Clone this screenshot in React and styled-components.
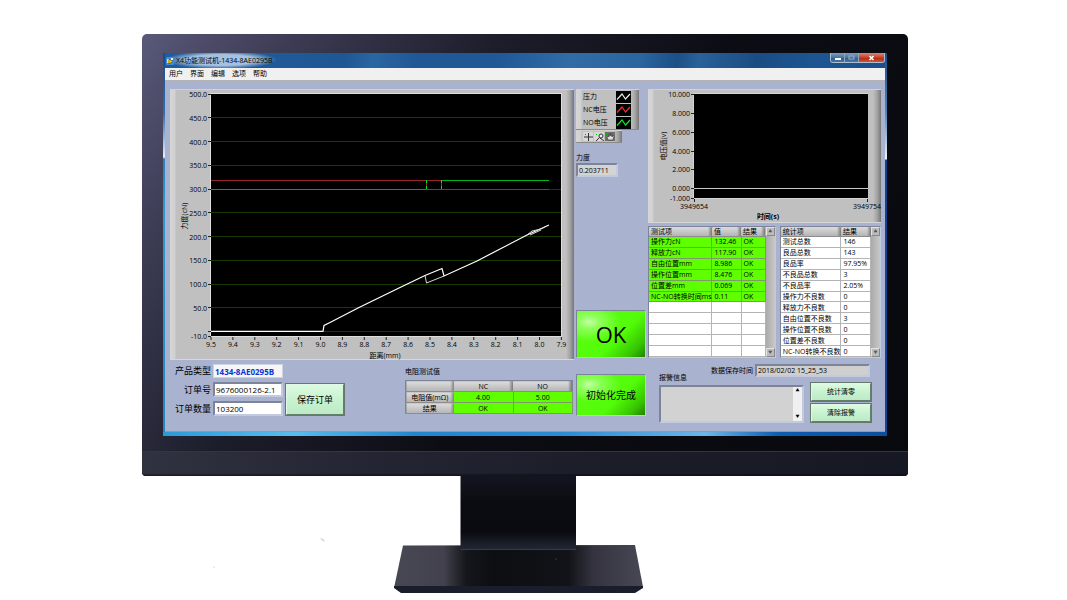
import styled, { createGlobalStyle, css } from "styled-components";

const GlobalStyle = createGlobalStyle`
	* {
		box-sizing: border-box;
	}
	body {
		margin: 0;
		background: #fff;
		color: #000;
		font-family: "Open Sans", "Noto Sans CJK SC", sans-serif;
		font-size: 7px;
		line-height: 10px;
	}
	button, input, textarea {
		font: inherit;
		color: inherit;
		margin: 0;
	}
`;

const menus = ["用户", "界面", "编辑", "选项", "帮助"];

const tests = [
	["操作力cN", "132.46", "OK"],
	["释放力cN", "117.90", "OK"],
	["自由位置mm", "8.986", "OK"],
	["操作位置mm", "8.476", "OK"],
	["位置差mm", "0.069", "OK"],
	["NC-NO转换时间ms", "0.11", "OK"],
	["", "", ""],
	["", "", ""],
	["", "", ""],
	["", "", ""],
	["", "", ""],
];

const stats = [
	["测试总数", "146"],
	["良品总数", "143"],
	["良品率", "97.95%"],
	["不良品总数", "3"],
	["不良品率", "2.05%"],
	["操作力不良数", "0"],
	["释放力不良数", "0"],
	["自由位置不良数", "3"],
	["操作位置不良数", "0"],
	["位置差不良数", "0"],
	["NC-NO转换不良数", "0"],
];

const legend = [
	{ name: "压力", color: "#e8e8e8" },
	{ name: "NC电压", color: "#e8303a" },
	{ name: "NO电压", color: "#00f020" },
];

function ForceChart() {
	const yTicks = [500, 450, 400, 350, 300, 250, 200, 150, 100, 50];
	const xTicks = Array.from({ length: 17 }, (_, i) => (9.5 - i * 0.1).toFixed(1));
	const y = (value) => 242.5 - value * 0.475;

	return (
		<ChartSvg viewBox="0 0 404 271" role="img" aria-label="力度 / 距离">
			<rect x="40" y="4" width="352" height="244" fill="#dedede" />
			<rect x="41" y="5" width="350" height="242" fill="#000" />
			{yTicks.map((value) => (
				<g key={value}>
					{value < 500 && (
						<path
							d={`M41 ${y(value)}H391`}
							stroke="#163c04"
							shapeRendering="crispEdges"
						/>
					)}
					<path d={`M38 ${y(value)}h3`} stroke="#222" shapeRendering="crispEdges" />
					<text x="37" y={y(value) + 3} textAnchor="end">
						{value.toFixed(1)}
					</text>
				</g>
			))}
			<path d="M41 242.5H391" stroke="#163c04" />
			<path d="M38 242.5h3M38 247.5h3" stroke="#222" />
			<text x="37" y="250" textAnchor="end">
				-10.0
			</text>
			{xTicks.map((value, i) => (
				<g key={value}>
					<path d={`M${41 + i * 21.9} 248v3`} stroke="#222" />
					<text x={41 + i * 21.9} y="258" textAnchor="middle">
						{value}
					</text>
				</g>
			))}
			<g fill="none" strokeWidth="1">
				<path d="M41 91.5H272" stroke="#98242a" />
				<path d="M272 91.5H379" stroke="#00b41c" />
				<path d="M41 100.5H256" stroke="#00a81c" />
				<path d="M256 100.5H379" stroke="#b82030" />
				<path d="M256.5 91V100M271.5 91V100" stroke="#c02830" />
				<path d="M256.5 91V100M271.5 91V100" stroke="#00e020" strokeDasharray="3 3" />
				<path
					d="M41 242.3H153L154 236.5L160 233.5L188 219L230 198.5L255 186.5L272 179.5L274 187L307 172L332 159L357 146L379 136"
					stroke="#fff"
					strokeWidth="1.2"
				/>
				<path
					d="M255 186.5L256.5 194L274 187M357 146L362 142L371 140L375 138M360 146L371 141"
					stroke="#d8d8d8"
				/>
			</g>
			<text x="215" y="269" textAnchor="middle">
				距离(mm)
			</text>
			<text transform="translate(17 127) rotate(-90)" textAnchor="middle">
				力度(cN)
			</text>
		</ChartSvg>
	);
}

function VoltageChart() {
	const ticks = [
		["10.000", 5],
		["8.000", 24],
		["6.000", 43],
		["4.000", 62],
		["2.000", 80],
		["0.000", 99],
		["-1.000", 109],
	];

	return (
		<ChartSvg viewBox="0 0 233 134" role="img" aria-label="电压值 / 时间">
			<rect x="45" y="4" width="175" height="106" fill="#d4d4d4" />
			<rect x="46" y="5" width="174" height="104" fill="#000" />
			<path d="M46 99.5H220" stroke="#c8c8c8" />
			{ticks.map(([label, top]) => (
				<g key={label}>
					<path d={`M43 ${top + 0.5}h3`} stroke="#222" />
					<text x="42" y={top + 3} textAnchor="end">
						{label}
					</text>
				</g>
			))}
			<path d="M46.5 110v3M219.5 110v3" stroke="#222" />
			<text x="46" y="120" textAnchor="middle">
				3949654
			</text>
			<text x="219" y="120" textAnchor="middle">
				3949754
			</text>
			<text x="120" y="130" textAnchor="middle" fontWeight="700">
				时间(s)
			</text>
			<text transform="translate(18 57) rotate(-90)" textAnchor="middle">
				电压值(v)
			</text>
		</ChartSvg>
	);
}

function Scroll({ name }) {
	return (
		<ScrollBar>
			<ScrollButton type="button" aria-label={`${name} 上`}>
				▲
			</ScrollButton>
			<ScrollButton type="button" aria-label={`${name} 下`}>
				▼
			</ScrollButton>
		</ScrollBar>
	);
}

function Stand() {
	return (
		<StandSvg viewBox="0 0 766 125" aria-hidden="true">
			<defs>
				<linearGradient id="neck" x1="0" y1="0" x2="0" y2="1">
					<stop offset="0" stopColor="#131620" />
					<stop offset="0.35" stopColor="#0b0c12" />
					<stop offset="0.75" stopColor="#0a0b0f" />
					<stop offset="1" stopColor="#222836" />
				</linearGradient>
				<linearGradient id="foot">
					<stop offset="0" stopColor="#484754" />
					<stop offset="0.2" stopColor="#42414d" />
					<stop offset="0.29" stopColor="#15161b" />
					<stop offset="0.4" stopColor="#0d0e12" />
					<stop offset="0.7" stopColor="#121318" />
					<stop offset="0.8" stopColor="#34333f" />
					<stop offset="1" stopColor="#484754" />
				</linearGradient>
			</defs>
			<path d="M261 69.500L493 69L501 111L252 112Z" fill="url(#foot)" />
			<path d="M252 110H501V112L493 117H259L252 112Z" fill="#1a1d2c" />
			<path d="M318.500 0H434V74H318.500Z" fill="url(#neck)" />
			<path d="M318.500 73.500H434" stroke="#343c4b" />
			<circle cx="414" cy="83" r="0.6" fill="#5a6072" />
			<path d="M178 62l3 1l2 3l-2-1z" fill="#c8c8c8" />
			<circle cx="72" cy="91" r="0.7" fill="#d0d0d0" />
		</StandSvg>
	);
}

function App() {
	return (
		<>
			<GlobalStyle />
			<Page>
				<Monitor>
					<Screen>
						<TitleBar>
							<svg width="8" height="8" viewBox="0 0 8 8" aria-hidden="true">
								<rect width="8" height="8" rx="1" fill="#3d8ede" />
								<path d="M1 2h3v4H1z" fill="#ffe23c" />
								<path d="M3 2l4 2.500l-4 2.500z" fill="#ffd21c" stroke="#543c00" strokeWidth="0.6" />
								<path d="M5 1h2v2H5z" fill="#e6f0fa" />
							</svg>
							<Title>X4功能测试机-1434-8AE0295B</Title>
							<WindowButtons>
								<WindowButton type="button" aria-label="最小化">
									<svg width="8" height="6" viewBox="0 0 8 6">
										<path d="M1 3h6v2H1z" fill="#fff" />
									</svg>
								</WindowButton>
								<WindowButton type="button" aria-label="最大化" disabled>
									<svg width="7" height="5" viewBox="0 0 7 5">
										<rect x="1" y="1" width="5" height="3" fill="none" stroke="#9dafc6" />
									</svg>
								</WindowButton>
								<WindowButton type="button" aria-label="关闭" $close>
									<svg width="7" height="6" viewBox="0 0 7 6">
										<path d="M1.500 1l4 4M5.500 1l-4 4" stroke="#fff" strokeWidth="1.6" />
									</svg>
								</WindowButton>
							</WindowButtons>
						</TitleBar>
						<MenuBar>
							{menus.map((menu) => (
								<MenuItem key={menu} type="button">
									{menu}
								</MenuItem>
							))}
						</MenuBar>
						<Panel>
							<ChartPanel>
								<ForceChart />
							</ChartPanel>
							<MiddleColumn>
								<Legend>
									{legend.map((item) => (
										<LegendRow key={item.name}>
											{item.name}
											<svg width="15" height="12" viewBox="0 0 15 12" aria-hidden="true">
												<rect width="15" height="12" fill="#000" />
												<path
													d="M1 8.500L6 3L9.500 8L14 3"
													fill="none"
													stroke={item.color}
													strokeWidth="1.2"
												/>
											</svg>
										</LegendRow>
									))}
								</Legend>
								<Tools>
									<ToolButton type="button" aria-label="游标">
										<svg width="9" height="8" viewBox="0 0 9 8">
											<path d="M0 4h9M4.500 0v8" stroke="#333" />
											<path d="M1 1h1v1H1z" fill="#0b0" />
										</svg>
									</ToolButton>
									<ToolButton type="button" aria-label="缩放">
										<svg width="9" height="8" viewBox="0 0 9 8">
											<path d="M1 8L5 4M5 5l4 3" stroke="#333" />
											<circle cx="6" cy="3" r="2" fill="#eee" stroke="#333" />
											<path d="M1 1h1v1H1z" fill="#0b0" />
										</svg>
									</ToolButton>
									<ToolButton type="button" aria-label="平移" $pressed>
										<svg width="9" height="8" viewBox="0 0 9 8">
											<path
												d="M2 7L1 4l1-1l1 1V1h1v2V1h1v2V1h1v3l1-2l1 1L7 7z"
												fill="#ddd"
												stroke="#333"
												strokeWidth="0.6"
											/>
											<path d="M0 0h2v2H0z" fill="#0b0" />
										</svg>
									</ToolButton>
								</Tools>
								<ForceLabel htmlFor="force">力度</ForceLabel>
								<ForceInput id="force" readOnly value="0.203711" />
								<StatusButton type="button" $large>
									OK
								</StatusButton>
							</MiddleColumn>
							<RightColumn>
								<ChartPanel>
									<VoltageChart />
								</ChartPanel>
								<Tables>
									<TableFrame $grow={128}>
										<DataTable>
											<colgroup>
												<col style={{ width: "54%" }} />
												<col style={{ width: "25%" }} />
												<col />
											</colgroup>
											<thead>
												<tr>
													<HeadCell>测试项</HeadCell>
													<HeadCell>值</HeadCell>
													<HeadCell>结果</HeadCell>
												</tr>
											</thead>
											<tbody>
												{tests.map((row, i) => (
													<tr key={i}>
														{row.map((cell, j) => (
															<Cell key={j} $pass={row[0] !== ""}>
																{cell || "\u00a0"}
															</Cell>
														))}
													</tr>
												))}
											</tbody>
										</DataTable>
										<Scroll name="测试项" />
									</TableFrame>
									<TableFrame $grow={101}>
										<DataTable>
											<colgroup>
												<col style={{ width: "65%" }} />
												<col />
											</colgroup>
											<thead>
												<tr>
													<HeadCell>统计项</HeadCell>
													<HeadCell>结果</HeadCell>
												</tr>
											</thead>
											<tbody>
												{stats.map((row) => (
													<tr key={row[0]}>
														<Cell>{row[0]}</Cell>
														<Cell>{row[1]}</Cell>
													</tr>
												))}
											</tbody>
										</DataTable>
										<Scroll name="统计项" />
									</TableFrame>
								</Tables>
							</RightColumn>

							<OrderArea>
								<OrderForm>
									<label htmlFor="product">产品类型</label>
									<ProductInput id="product" readOnly value="1434-8AE0295B" />
									<label htmlFor="order">订单号</label>
									<OrderInput id="order" defaultValue="9676000126-2.1" />
									<label htmlFor="amount">订单数量</label>
									<OrderInput id="amount" defaultValue="103200" />
								</OrderForm>
								<SaveButton type="button">保存订单</SaveButton>
								<Resistance>
									<caption>电阻测试值</caption>
									<thead>
										<tr>
											<HeadCell $center />
											<HeadCell $center>NC</HeadCell>
											<HeadCell $center>NO</HeadCell>
										</tr>
									</thead>
									<tbody>
										<tr>
											<HeadCell $center>电阻值(mΩ)</HeadCell>
											<Cell $pass $center>4.00</Cell>
											<Cell $pass $center>5.00</Cell>
										</tr>
										<tr>
											<HeadCell $center>结果</HeadCell>
											<Cell $pass $center>OK</Cell>
											<Cell $pass $center>OK</Cell>
										</tr>
									</tbody>
								</Resistance>
							</OrderArea>
							<InitArea>
								<StatusButton type="button">初始化完成</StatusButton>
							</InitArea>
							<AlarmArea>
								<TimeRow>
									<label htmlFor="saved">数据保存时间</label>
									<TimeInput id="saved" readOnly value="2018/02/02 15_25_53" />
								</TimeRow>
								<AlarmRow>
									<AlarmField>
										<label htmlFor="alarm">报警信息</label>
										<AlarmBox>
											<textarea id="alarm" readOnly />
											<AlarmScroll>
												<ArrowButton type="button" aria-label="报警信息 上">
													▲
												</ArrowButton>
												<ArrowButton type="button" aria-label="报警信息 下">
													▼
												</ArrowButton>
											</AlarmScroll>
										</AlarmBox>
									</AlarmField>
									<AlarmButtons>
										<MintButton type="button">统计清零</MintButton>
										<MintButton type="button">清除报警</MintButton>
									</AlarmButtons>
								</AlarmRow>
							</AlarmArea>
						</Panel>
					</Screen>
					<Chin />
				</Monitor>
				<Stand />
			</Page>
		</>
	);
}

const metal = css`
	background: linear-gradient(
		90deg,
		#d6d6d6 0,
		#d0d0d0 5px,
		#c0c0c0 6px,
		#c0c0c0 calc(100% - 8px),
		#a4a4a4 calc(100% - 4px),
		#777 100%
	);
	border-top: 1px solid #d2d2d2;
`;

const sunken = css`
	border: 2px solid;
	border-color: #7c8499 #c3cae0 #c3cae0 #7c8499;
	border-radius: 0;
	outline: none;
`;

const Page = styled.main`
	display: flex;
	flex-direction: column;
	padding: 34px 159px 0 142px;
`;

const Monitor = styled.section`
	border-radius: 5px 5px 4px 4px;
	overflow: hidden;
	background: linear-gradient(
		125deg,
		#59597a 0%,
		#3c3c54 14%,
		#1c1d2a 34%,
		#0c0d14 55%,
		#08090d 100%
	);
`;

const Screen = styled.div`
	margin: 19px 21px 15px;
	padding: 0 2px 4px;
	background:
		linear-gradient(90deg, #2a9ad8, #58bdee 18%, #2286cc 35%, #2a8bd2 55%, #6db6ea 75%, #0d5db0 85%, #0a4f9c)
			bottom / 100% 4px no-repeat,
		linear-gradient(180deg, #1a4b8c 0, #2d6db0 60px, #e4eff8 104px, #2a7fc0 106px, #3199cc 160px, #2285c4 100%)
			left / 2px 100% no-repeat,
		linear-gradient(180deg, #1a4b8c 0, #4f86bd 60px, #eef4fa 106px, #173f8f 107px, #16459a 100%)
			right / 2px 100% no-repeat,
		#1c5592;
`;

const TitleBar = styled.header`
	display: flex;
	align-items: center;
	gap: 2px;
	height: 15px;
	padding-left: 1px;
	background:
		radial-gradient(ellipse 56px 9px at 56px 7px, rgba(190, 212, 236, 0.85) 60%, transparent),
		linear-gradient(
			100deg,
			#215c9d 0%,
			#1e5794 25%,
			#2a66a2 29%,
			#1f5895 35%,
			#1f5895 46%,
			#316ca6 56%,
			#2a659e 66%,
			#1c4f86 71%,
			#2a6199 74%,
			#1a4c82 82%,
			#1d5592 90%,
			#1b4f8a 100%
		);
`;

const Title = styled.h1`
	flex: 1;
	margin: 0;
	font-size: 7px;
	font-weight: 400;
	line-height: 12px;
`;

const WindowButtons = styled.div`
	display: flex;
	align-self: flex-start;
	border: 1px solid #a9bdd3;
	border-top: 0;
	border-radius: 0 0 3px 3px;
	overflow: hidden;
`;

const WindowButton = styled.button`
	display: flex;
	align-items: center;
	justify-content: center;
	width: ${({ $close }) => ($close ? 25 : 14)}px;
	height: 9px;
	padding: 0;
	border: 0;
	border-right: ${({ $close }) => ($close ? 0 : "1px solid #8ba3bf")};
	background: ${({ $close }) =>
		$close
			? "linear-gradient(#d88a7c, #c4432e 50%, #b3240f 51%, #d3532f)"
			: "linear-gradient(#7f9fc2, #4a739f 50%, #2d5887 51%, #4a77a6)"};
`;

const MenuBar = styled.nav`
	display: flex;
	gap: 7px;
	height: 13px;
	padding: 0 4px;
	background: #f0f0f0;
	border-bottom: 1px solid #b4b4b4;
`;

const MenuItem = styled.button`
	padding: 0;
	border: 0;
	background: none;
	line-height: 10px;
`;

const Panel = styled.div`
	display: grid;
	grid-template-columns: minmax(0, 1fr) 70px 233px;
	column-gap: 2px;
	padding: 8px 4px 1px 5px;
	background: #a9b2ce;
	border-bottom: 1px solid #8f98b4;
`;

const ChartPanel = styled.div`
	${metal}
	border-bottom: 1px solid #d8d8d8;
	line-height: 0;
`;

const ChartSvg = styled.svg`
	display: block;
	width: 100%;
	margin: -1px 0;
	overflow: visible;
	fill: #000;
	font-size: 7px;
`;

const MiddleColumn = styled.div`
	display: flex;
	flex-direction: column;
	align-items: flex-start;
	padding-bottom: 2px;
`;

const Legend = styled.div`
	${metal}
	width: 63px;
	padding: 0 8px 0 7px;
	border-bottom: 1px solid #8a8a8a;
`;

const LegendRow = styled.div`
	display: flex;
	align-items: center;
	justify-content: space-between;
	height: 13px;
`;

const Tools = styled.div`
	${metal}
	display: flex;
	gap: 1px;
	height: 13px;
	width: 46px;
	padding: 1px 0 1px 7px;
	border-bottom: 1px solid #8a8a8a;
`;

const ToolButton = styled.button`
	display: flex;
	align-items: center;
	justify-content: center;
	width: 10px;
	padding: 0;
	border: 0;
	background: ${({ $pressed }) => ($pressed ? "#6e6e6e" : "#d8d8d8")};
`;

const ForceLabel = styled.label`
	margin-top: 10px;
`;

const ForceInput = styled.input`
	${sunken}
	width: 42px;
	height: 14px;
	padding: 0 1px;
	background: #d4d4d4;
`;

const StatusButton = styled.button`
	width: 70px;
	height: ${({ $large }) => ($large ? 48 : 42)}px;
	margin-top: ${({ $large }) => ($large ? "auto" : 0)};
	padding: 0;
	border: 1px solid;
	border-color: #7c8499 #c3cae0 #c3cae0 #7c8499;
	background:
		radial-gradient(ellipse at 18% 24%, #c4ffa4 0, #8cff58 14%, rgba(85, 255, 10, 0) 40%),
		linear-gradient(135deg, #5cff14 0%, #52fc08 60%, #36c400 85%, #1f8400 100%);
	font-size: ${({ $large }) => ($large ? 22 : 10)}px;
	line-height: 24px;
`;

const RightColumn = styled.div`
	display: flex;
	flex-direction: column;
	gap: 3px;
	padding-bottom: 2px;
`;

const Tables = styled.div`
	display: flex;
	flex: 1;
	gap: 4px;
`;

const TableFrame = styled.div`
	display: flex;
	flex: ${({ $grow }) => $grow} 1 0;
	min-width: 0;
	border: 1px solid;
	border-color: #7c8499 #c3cae0 #c3cae0 #7c8499;
`;

const DataTable = styled.table`
	flex: 1;
	min-width: 0;
	height: 130px;
	table-layout: fixed;
	border-collapse: collapse;
`;

const Cell = styled.td`
	padding: 0 0 0 2px;
	border: 1px solid ${({ $pass }) => ($pass ? "#7d9a6c" : "#b4b4b4")};
	border-width: 0 1px 1px 0;
	background: ${({ $pass }) => ($pass ? "#5fff00" : "#fff")};
	line-height: 9px;
	white-space: nowrap;
	text-align: ${({ $center }) => ($center ? "center" : "left")};
`;

const HeadCell = styled.th`
	padding: 0 0 0 2px;
	background: linear-gradient(90deg, transparent calc(100% - 4px), #777), linear-gradient(#dcdcdc, #b4b4b4);
	border-bottom: 1px solid #8c8c8c;
	border-radius: 2px;
	font-weight: 400;
	line-height: 9px;
	white-space: nowrap;
	text-align: ${({ $center }) => ($center ? "center" : "left")};
`;

const ScrollBar = styled.div`
	display: flex;
	flex-direction: column;
	justify-content: space-between;
	width: 9px;
	background: linear-gradient(90deg, #aaa, #c8c8c8);
`;

const ScrollButton = styled.button`
	height: 9px;
	padding: 0;
	border: 1px solid;
	border-color: #e2e2e2 #888 #888 #e2e2e2;
	background: #bcbcbc;
	color: #555;
	font-size: 4px;
	line-height: 6px;
`;

const OrderArea = styled.div`
	display: flex;
	align-items: flex-start;
	padding: 4px 1px 0 5px;
`;

const OrderForm = styled.form`
	display: grid;
	grid-template-columns: 36px 70px;
	align-items: center;
	column-gap: 2px;
	row-gap: 4px;
	font-size: 9px;
	line-height: 12px;
	text-align: right;
	white-space: nowrap;
`;

const OrderInput = styled.input`
	${sunken}
	width: 100%;
	height: 15px;
	padding: 0 1px;
	background: #fff;
	font-size: 8px;
`;

const ProductInput = styled(OrderInput)`
	height: 14px;
	border: 1px solid #cfd4e2;
	background: #f6f6f6;
	color: #0a34d8;
	font-weight: 700;
`;

const MintButton = styled.button`
	width: 62px;
	height: 20px;
	padding: 0;
	border: 2px solid;
	border-color: #e2f8e6 #64806c #64806c #e2f8e6;
	outline: 1px solid #66786e;
	outline-offset: -1px;
	background: linear-gradient(#dcfbe0, #c8f2d0 50%, #bdeac6);
`;

const SaveButton = styled(MintButton)`
	width: 60px;
	height: 33px;
	margin: 19px 0 0 2px;
	font-size: 9px;
`;

const Resistance = styled.table`
	width: 168px;
	margin: 3px 0 0 auto;
	table-layout: fixed;
	border-collapse: collapse;
	caption {
		padding-bottom: 3px;
		text-align: left;
	}
	border: 1px solid #7c8499;
	th:first-child {
		width: 48px;
	}
	td, th {
		padding: 0;
		height: 11px;
	}
`;

const InitArea = styled.div`
	padding-top: 14px;
`;

const AlarmArea = styled.div`
	padding: 4px 9px 7px 11px;
`;

const TimeRow = styled.div`
	display: flex;
	justify-content: flex-end;
	align-items: center;
	gap: 2px;
	padding-right: 2px;
`;

const TimeInput = styled.input`
	${sunken}
	width: 115px;
	height: 13px;
	padding: 0 1px;
	background: #cfcfcf;
`;

const AlarmRow = styled.div`
	display: flex;
	justify-content: space-between;
	align-items: flex-end;
	margin-top: -4px;
`;

const AlarmField = styled.div`
	display: flex;
	flex-direction: column;
	gap: 2px;
`;

const AlarmBox = styled.div`
	${sunken}
	display: flex;
	width: 145px;
	height: 38px;
	background: #d2d2d2;
	textarea {
		flex: 1;
		min-width: 0;
		padding: 0;
		border: 0;
		background: none;
		resize: none;
		outline: none;
	}
`;

const AlarmScroll = styled.div`
	display: flex;
	flex-direction: column;
	justify-content: space-between;
	width: 9px;
	background: #f0f0f0;
`;

const ArrowButton = styled.button`
	padding: 0;
	border: 0;
	background: none;
	font-size: 4px;
	line-height: 8px;
`;

const AlarmButtons = styled.div`
	display: flex;
	flex-direction: column;
	gap: 1px;
`;

const Chin = styled.div`
	height: 25px;
	border-top: 1px solid #34353f;
	background:
		linear-gradient(transparent 21px, rgba(0, 0, 10, 0.5)),
		linear-gradient(90deg, #30323f, #232532 30%, #1b1d29 60%, #161823);
`;

const StandSvg = styled.svg`
	display: block;
	width: 766px;
	height: 125px;
	align-self: center;
`;

export default App;
